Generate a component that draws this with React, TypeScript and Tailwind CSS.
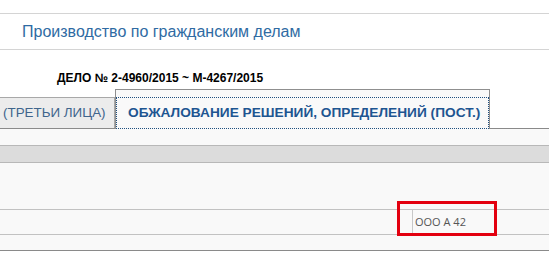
export default function App() {
  return (
    <div className="w-[549px] h-[262px] bg-white overflow-hidden font-['Liberation_Sans',Arial,sans-serif]">
      <div className="h-[14px] border-b border-[#d4d4d4]" />
      <div className="h-[36px] flex items-center pl-[22px] border-b border-[#d4d4d4] text-[16px] text-[#2f6ba3]">
        Производство по гражданским делам
      </div>
      <div className="h-[39px] pl-[57px] pt-[21px] text-[12px] font-bold text-black leading-[14px]">
        ДЕЛО № 2-4960/2015 ~ М-4267/2015
      </div>
      <div className="flex items-end h-[40px] border-b border-[#8a8a8a]">
        <div className="w-[115px] h-[31px] bg-[#ececec] border-t border-r border-[#a8a8a8] flex items-center pl-[3px] text-[13.4px] text-[#40658c] whitespace-nowrap">
          (ТРЕТЬИ ЛИЦА)
        </div>
        <div className="relative -mb-px w-[375px] h-[40px] border border-b-0 border-[#8f8f8f] bg-[#f9f9f9] pt-[7px]">
          <div className="h-[32px] border border-dotted border-[#1f4f7f] flex items-center pl-[11px] text-[13.7px] font-bold text-[#1e5591] whitespace-nowrap">
            ОБЖАЛОВАНИЕ РЕШЕНИЙ, ОПРЕДЕЛЕНИЙ (ПОСТ.)
          </div>
        </div>
      </div>
      <div className="bg-[#f9f9f9] pt-[16px] border-b border-[#8a8a8a]">
        <div className="h-[18px] bg-[#dcdcdc] border-y border-[#b8b8b8]" />
        <div className="h-[46px]" />
        <div className="relative h-[25px] border-t border-[#c2c2c2] flex">
          <div className="w-[412px]" />
          <div className="border-l border-[#c8c8c8] pl-[2px] flex items-center text-[11px] text-[#555] font-['Open_Sans',sans-serif]">
            ООО А 42
          </div>
          <div className="absolute left-[397px] top-[-9px] w-[100px] h-[35px] border-[3px] border-[#e3000f]" />
        </div>
        <div className="h-[16px] border-t border-[#c2c2c2]" />
      </div>
    </div>
  );
}
